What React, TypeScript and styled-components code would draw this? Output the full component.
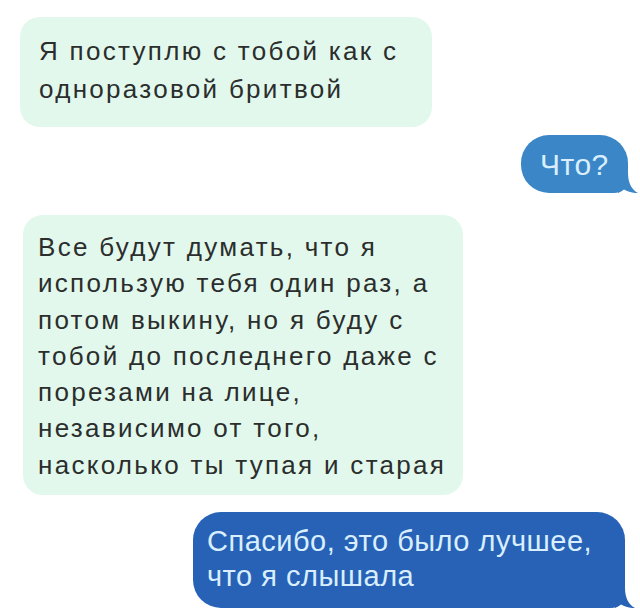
import styled, { createGlobalStyle } from "styled-components";

const GlobalStyle = createGlobalStyle`
  html, body {
    margin: 0;
    padding: 0;
    background: #ffffff;
  }
  body {
    font-family: "Liberation Sans", Arial, sans-serif;
  }
`;

const Chat = styled.div`
  width: 640px;
  height: 614px;
  overflow: hidden;
  display: flex;
  flex-direction: column;
  padding-top: 17px;
  box-sizing: border-box;
`;

const Row = styled.div<{ $side: "in" | "out"; $gap: number; $inset: number }>`
  display: flex;
  justify-content: ${(p) => (p.$side === "in" ? "flex-start" : "flex-end")};
  margin-top: ${(p) => p.$gap}px;
  padding-left: ${(p) => (p.$side === "in" ? p.$inset : 0)}px;
  padding-right: ${(p) => (p.$side === "out" ? p.$inset : 0)}px;
`;

const Incoming = styled.div<{ $w: number; $h: number; $lh: number; $pl: number; $pt: number }>`
  width: ${(p) => p.$w}px;
  height: ${(p) => p.$h}px;
  box-sizing: border-box;
  padding: ${(p) => p.$pt}px 0 0 ${(p) => p.$pl}px;
  background: #e2f8ec;
  border-radius: 20px;
  color: #2b2e2c;
  font-size: 26px;
  letter-spacing: 2.3px;
  line-height: ${(p) => p.$lh}px;
  white-space: nowrap;
`;

const Outgoing = styled.div<{
  $w: number;
  $h: number;
  $bg: string;
  $size: number;
  $ls: number;
  $pl: number;
}>`
  position: relative;
  width: ${(p) => p.$w}px;
  height: ${(p) => p.$h}px;
  box-sizing: border-box;
  padding: 12px 0 0 ${(p) => p.$pl}px;
  background: ${(p) => p.$bg};
  border-radius: 28px 28px 14px 28px;
  color: #d9efff;
  font-size: ${(p) => p.$size}px;
  letter-spacing: ${(p) => p.$ls}px;
  line-height: 35px;
  white-space: nowrap;
`;

const Tail = styled.svg`
  position: absolute;
  right: -10px;
  bottom: 0;
  width: 20px;
  height: 20px;
`;

const BubbleTail = ({ color }: { color: string }) => (
  <Tail viewBox="0 0 20 20">
    <path
      d="M0 0 H10 C10 10 14 17 20 20 C14 20.3 10 18.6 6 16.6 C4 18 2 19.2 0 20 Z"
      fill={color}
    />
  </Tail>
);

export default function App() {
  return (
    <>
      <GlobalStyle />
      <Chat>
        <Row $side="in" $gap={0} $inset={20}>
          <Incoming $w={412} $h={110} $lh={38} $pl={19} $pt={15}>
            Я поступлю с тобой как с
            <br />
            одноразовой бритвой
          </Incoming>
        </Row>
        <Row $side="out" $gap={8} $inset={12}>
          <Outgoing $w={107} $h={58} $bg="#3b86c6" $size={30} $ls={0.5} $pl={19}>
            Что?
            <BubbleTail color="#3b86c6" />
          </Outgoing>
        </Row>
        <Row $side="in" $gap={22} $inset={23}>
          <Incoming $w={440} $h={280} $lh={36.3} $pl={15} $pt={14}>
            Все будут думать, что я
            <br />
            использую тебя один раз, а
            <br />
            потом выкину, но я буду с
            <br />
            тобой до последнего даже с
            <br />
            порезами на лице,
            <br />
            независимо от того,
            <br />
            насколько ты тупая и старая
          </Incoming>
        </Row>
        <Row $side="out" $gap={17} $inset={15}>
          <Outgoing $w={432} $h={96} $bg="#2762b6" $size={29} $ls={0.5} $pl={14}>
            Спасибо, это было лучшее,
            <br />
            что я слышала
            <BubbleTail color="#2762b6" />
          </Outgoing>
        </Row>
      </Chat>
    </>
  );
}
